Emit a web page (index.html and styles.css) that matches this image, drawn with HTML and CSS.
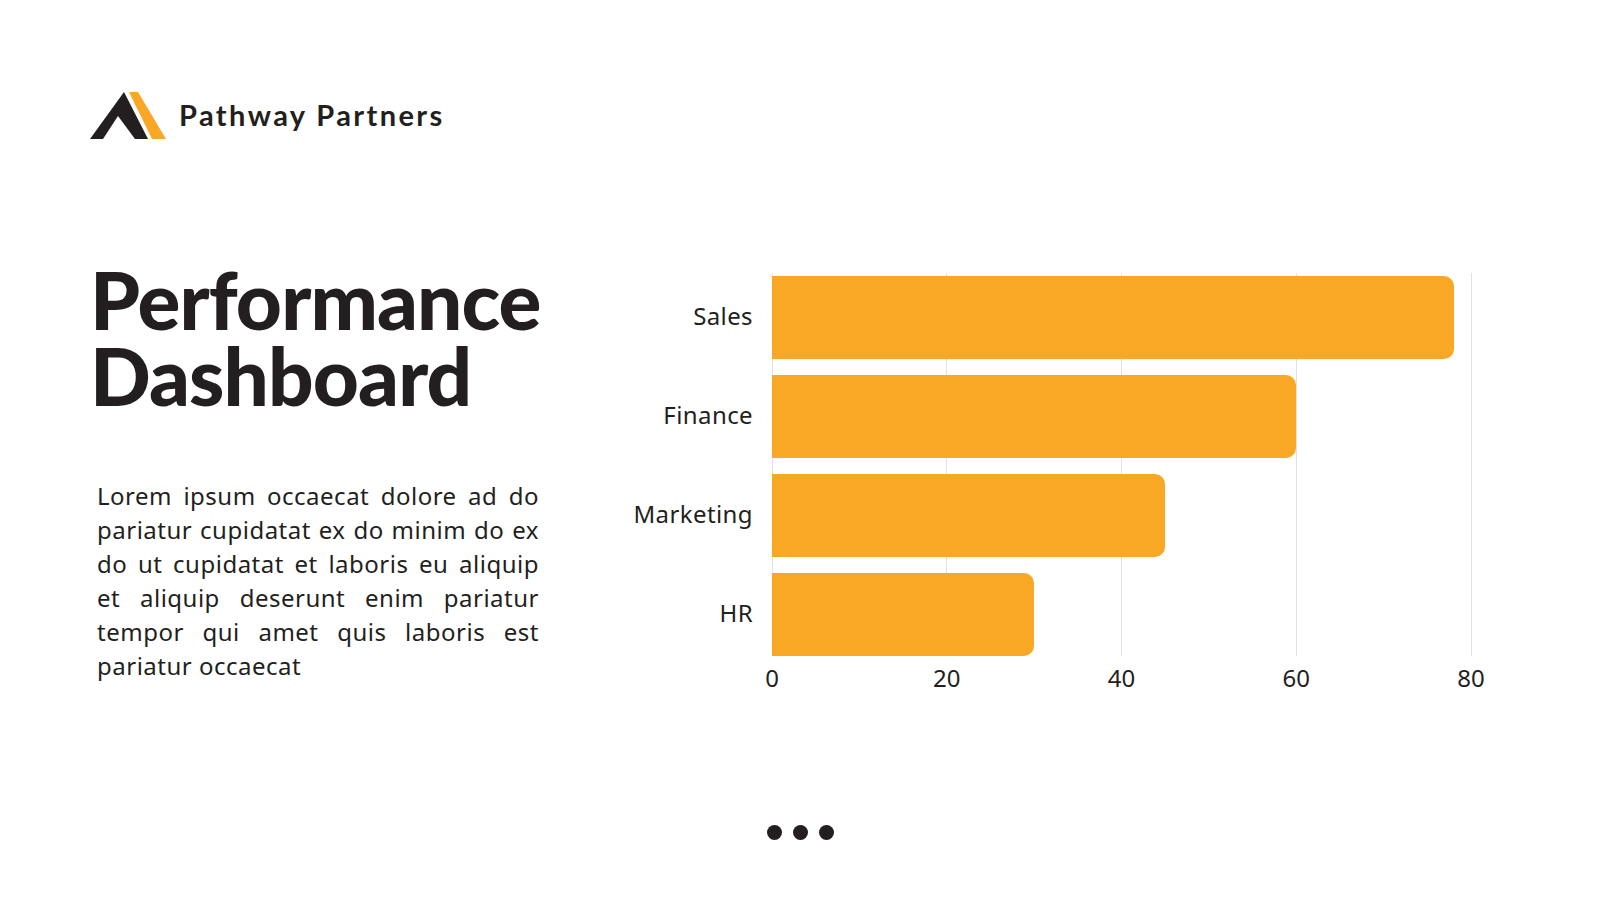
FILE: index.html
```html
<!DOCTYPE html>
<html lang="en">
<head>
<meta charset="utf-8">
<title>Performance Dashboard</title>
<link rel="stylesheet" href="styles.css">
</head>
<body>
<div class="slide">
  <header class="brand">
    <svg class="brand-logo" width="80" height="50" viewBox="0 0 80 50" aria-hidden="true">
      <polygon points="2,49 36,2 60,49 47,49 30,26 15,49" fill="#231f20"/>
      <polygon points="41,2 50,2 78,49 64,49" fill="#f9a826"/>
    </svg>
    <span class="brand-name">Pathway Partners</span>
  </header>

  <main class="content">
    <section class="intro">
      <h1 class="title"><span class="title-line">Performance</span><span class="title-line">Dashboard</span></h1>
      <p class="lead">Lorem ipsum occaecat dolore ad do pariatur cupidatat ex do minim do ex do ut cupidatat et laboris eu aliquip et aliquip deserunt enim pariatur tempor qui amet quis laboris est pariatur occaecat</p>
    </section>

    <section class="chart">
      <div class="labels">
        <div class="label">Sales</div>
        <div class="label">Finance</div>
        <div class="label">Marketing</div>
        <div class="label">HR</div>
      </div>
      <div class="plot">
        <span class="grid" style="left:0%"></span>
        <span class="grid" style="left:25%"></span>
        <span class="grid" style="left:50%"></span>
        <span class="grid" style="left:75%"></span>
        <span class="grid" style="left:100%"></span>
        <div class="bars">
          <div class="bar" style="width:97.5%"></div>
          <div class="bar" style="width:75%"></div>
          <div class="bar" style="width:56.25%"></div>
          <div class="bar" style="width:37.5%"></div>
        </div>
      </div>
      <div class="axis-spacer"></div>
      <div class="axis">
        <span class="tick" style="left:0%">0</span>
        <span class="tick" style="left:25%">20</span>
        <span class="tick" style="left:50%">40</span>
        <span class="tick" style="left:75%">60</span>
        <span class="tick" style="left:100%">80</span>
      </div>
    </section>
  </main>

  <div class="dots">
    <span class="dot"></span>
    <span class="dot"></span>
    <span class="dot"></span>
  </div>
</div>
</body>
</html>
```

FILE: styles.css
```css
* {
  box-sizing: border-box;
}

html, body {
  margin: 0;
  padding: 0;
  background: #ffffff;
}

.slide {
  width: 1600px;
  height: 900px;
  display: flex;
  flex-direction: column;
  color: #231f20;
  font-family: "Noto Sans", "Open Sans", sans-serif;
  overflow: hidden;
}

/* Header */
.brand {
  display: flex;
  align-items: center;
  gap: 11px;
  margin: 90px 0 0 88px;
  height: 50px;
}

.brand-logo {
  display: block;
  flex: none;
}

.brand-name {
  font-family: "Lato", "Noto Sans", sans-serif;
  font-weight: 700;
  font-size: 29px;
  letter-spacing: 2.4px;
  color: #231f20;
  line-height: 1;
  margin-top: -2px;
}

/* Main content */
.content {
  display: flex;
  align-items: flex-start;
  margin-top: 121px;
}

.intro {
  width: 460px;
  margin-left: 90px;
}

.title {
  margin: 0;
  font-family: "Lato", "Noto Sans", sans-serif;
  font-weight: 900;
  font-size: 80px;
  letter-spacing: -0.9px;
  color: #231f20;
}

.title-line {
  display: block;
  height: 76px;
  line-height: 76px;
}

.lead {
  margin: 66px 0 0 7px;
  width: 442px;
  font-size: 24px;
  line-height: 34px;
  letter-spacing: 0.5px;
  text-align: justify;
  color: #231f20;
}

/* Chart */
.chart {
  display: grid;
  grid-template-columns: 150px 699px;
  column-gap: 19px;
  margin-left: 53px;
  margin-top: 12px;
}

.labels {
  display: flex;
  flex-direction: column;
  gap: 16px;
  padding-top: 1px;
}

.label {
  height: 83px;
  display: flex;
  align-items: center;
  justify-content: flex-end;
  font-size: 24px;
  line-height: 1;
  letter-spacing: 0.4px;
  color: #231f20;
}

.plot {
  position: relative;
  padding-top: 3px;
}

.grid {
  position: absolute;
  top: 0;
  bottom: 0;
  width: 1px;
  margin-left: -0.5px;
  background: #e1e1e1;
}

.bars {
  position: relative;
  display: flex;
  flex-direction: column;
  gap: 16px;
}

.bar {
  height: 83px;
  background: #f9a826;
  border-radius: 0 10px 10px 0;
}

.axis {
  position: relative;
  height: 24px;
  margin-top: 10px;
}

.tick {
  position: absolute;
  top: 0;
  transform: translateX(-50%);
  font-size: 24px;
  line-height: 24px;
  color: #231f20;
}

/* Pager dots */
.dots {
  margin-top: auto;
  margin-bottom: 60px;
  display: flex;
  justify-content: center;
  gap: 11px;
}

.dot {
  width: 15px;
  height: 15px;
  border-radius: 50%;
  background: #231f20;
}
```
